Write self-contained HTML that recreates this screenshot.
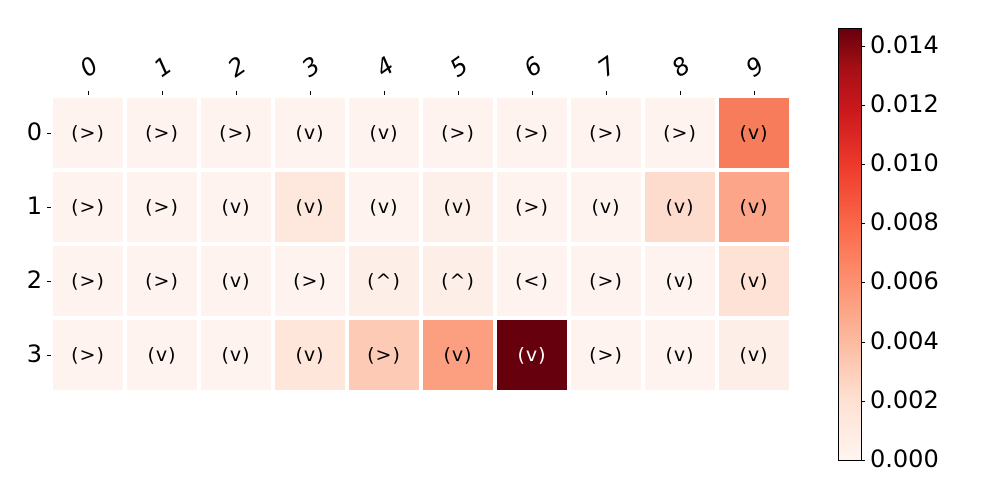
<!DOCTYPE html><html><head><style>
body{margin:0;width:1000px;height:500px;background:#fff;position:relative;font-family:"DejaVu Sans","Liberation Sans",sans-serif;overflow:hidden}
.c{position:absolute;width:70px;height:70px;display:flex;align-items:center;justify-content:center;font-size:19px;letter-spacing:1px;color:#000}
.cl{position:absolute;font-size:24px;font-style:italic;transform:rotate(-35deg);width:30px;text-align:center}
.t{position:absolute;background:#000}
.rl{position:absolute;font-size:24px;width:20px;text-align:right}
.cb{position:absolute;font-size:24px;left:870px}
</style></head><body>
<div id="g"></div>
<div style="position:absolute;left:838px;top:28px;width:22px;height:431px;border:1px solid #000;background:linear-gradient(to top,#fff5f0 0%,#fee0d2 14%,#fcbba1 27%,#fc9272 41%,#fb6a4a 54%,#ef3b2c 68%,#cb181d 81%,#a50f15 91%,#67000d 100%)"></div>
<script>
var L='#fef3ef';
var cols=[
[L,L,L,L,L,L,L,L,L,'#f67c5c'],
[L,L,L,'#fee8de',L,'#fdefe9',L,L,'#fedccd','#fca588'],
[L,L,L,L,'#fdeee8','#fdeee8',L,L,L,'#fee2d5'],
[L,L,L,'#fee6da','#fdcab5','#fc9f81','#67000d',L,L,'#fdeee8']];
var tx=[['(>)','(>)','(>)','(v)','(v)','(>)','(>)','(>)','(>)','(v)'],
['(>)','(>)','(v)','(v)','(v)','(v)','(>)','(v)','(v)','(v)'],
['(>)','(>)','(v)','(>)','(^)','(^)','(<)','(>)','(v)','(v)'],
['(>)','(v)','(v)','(v)','(>)','(v)','(v)','(>)','(v)','(v)']];
var h='';
for(var r=0;r<4;r++){for(var c=0;c<10;c++){h+='<div class="c" style="left:'+(53+74*c)+'px;top:'+(98+74*r)+'px;background:'+cols[r][c]+(r==3&&c==6?';color:#fff':'')+'">'+tx[r][c]+'</div>';}
h+='<div class="rl" style="left:22px;top:'+(118+74*r)+'px">'+r+'</div><div class="t" style="left:47px;top:'+(133+74*r)+'px;width:4px;height:1px"></div>';}
for(var c=0;c<10;c++){h+='<div class="cl" style="left:'+(74+74*c)+'px;top:53px">'+c+'</div><div class="t" style="left:'+(88+74*c)+'px;top:91px;width:1px;height:4px"></div>';}
var v=['0.014','0.012','0.010','0.008','0.006','0.004','0.002','0.000'];
for(var i=0;i<8;i++){var y=46+i*59.1;h+='<div class="cb" style="top:'+(y-15)+'px">'+v[i]+'</div><div class="t" style="left:861px;top:'+y+'px;width:4px;height:1px"></div>';}
document.getElementById('g').innerHTML=h;
</script>
</body></html>
